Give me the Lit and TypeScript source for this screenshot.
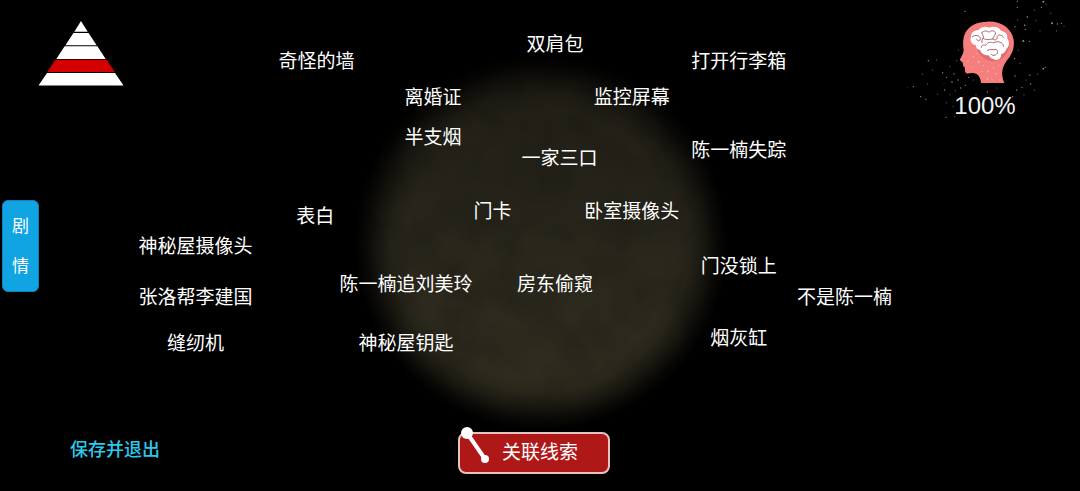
import { LitElement, html, css, svg } from 'lit';
import { customElement } from 'lit/decorators.js';

interface Clue { name: string; x: number; y: number; }

/* Centre of each clue, in percent of the board. */
const CLUES: Clue[] = [
  { name: '双肩包', x: 51.4, y: 8.7 },
  { name: '奇怪的墙', x: 29.3, y: 12.2 },
  { name: '打开行李箱', x: 68.4, y: 12.2 },
  { name: '离婚证', x: 40.1, y: 19.6 },
  { name: '监控屏幕', x: 58.5, y: 19.6 },
  { name: '半支烟', x: 40.1, y: 27.6 },
  { name: '陈一楠失踪', x: 68.4, y: 30.3 },
  { name: '一家三口', x: 51.8, y: 32 },
  { name: '门卡', x: 45.6, y: 42.7 },
  { name: '卧室摄像头', x: 58.5, y: 42.7 },
  { name: '表白', x: 29.2, y: 43.8 },
  { name: '神秘屋摄像头', x: 18.1, y: 49.9 },
  { name: '门没锁上', x: 68.4, y: 54 },
  { name: '陈一楠追刘美玲', x: 37.6, y: 57.6 },
  { name: '房东偷窥', x: 51.4, y: 57.6 },
  { name: '张洛帮李建国', x: 18.1, y: 60.3 },
  { name: '不是陈一楠', x: 78.2, y: 60.3 },
  { name: '烟灰缸', x: 68.4, y: 68.6 },
  { name: '缝纫机', x: 18.1, y: 69.6 },
  { name: '神秘屋钥匙', x: 37.6, y: 69.6 },
];

/* Sparks round the head: x, y, radius. */
const SPARKS: number[][] = [
  [352, 4, 2], [352, 22, 2], [195, 34, 2], [430, 5, 3], [424, 22, 2], [438, 12, 1.5], [404, 30, 1.5], [382, 51, 2.5],
  [374, 76, 2.5], [370, 123, 3], [388, 124, 2], [376, 88, 2], [345, 80, 2], [456, 70, 3], [472, 72, 2], [452, 40, 1.5],
  [470, 92, 1.5], [484, 70, 2], [492, 78, 1.5], [408, 62, 1.5], [420, 92, 1.5], [352, 60, 1.5], [430, 206, 2.5],
  [436, 202, 2], [412, 222, 1.5], [390, 225, 2], [392, 252, 2], [378, 240, 1.5], [366, 262, 2], [345, 228, 2],
  [350, 270, 2], [372, 284, 1.5], [404, 270, 1.5], [338, 290, 2], [360, 190, 1.5], [344, 176, 2], [355, 150, 1.5],
  [85, 182, 2], [110, 180, 1.5], [98, 210, 1.5], [68, 222, 1.5], [128, 218, 2], [140, 232, 2], [156, 246, 2.5],
  [162, 222, 2], [174, 240, 2], [40, 260, 2], [22, 262, 1.2], [82, 252, 1.5], [62, 290, 2], [78, 298, 2], [112, 282, 1.5],
  [134, 270, 2], [150, 284, 1.5], [166, 272, 1.5], [182, 264, 2], [196, 256, 2], [206, 232, 2], [220, 240, 1.5],
  [140, 308, 1.5], [160, 320, 1.5], [138, 352, 2], [164, 350, 1.5], [228, 284, 1.5], [262, 276, 2], [290, 264, 1.5],
  [150, 200, 1.5], [170, 182, 1.5], [176, 150, 1.5], [132, 250, 1.2],
];
const FACE_SPARKS: number[][] = [
  [204, 184, 2.5], [220, 170, 2], [236, 186, 3], [216, 202, 2], [250, 196, 2], [264, 214, 2.5], [280, 204, 2],
  [288, 222, 2.5], [262, 236, 2.5], [276, 240, 2], [296, 196, 2], [246, 214, 2], [230, 160, 2], [300, 240, 2],
];
const dots = (list: number[][], tone: string) =>
  list.map(([x, y, r]) => svg`<circle cx=${x} cy=${y} r=${r} fill=${tone}></circle>`);

@customElement('clue-board')
export class ClueBoard extends LitElement {
  static styles = css`
    :host { display: block; position: absolute; inset: 0; overflow: hidden; }
    .wall { position: absolute; inset: 0; width: 100%; height: 100%; }
    .clue {
      position: absolute; transform: translate(-50%, -50%);
      padding: 0; border: 0; background: none; color: #fff; white-space: nowrap; cursor: pointer;
      font: 400 19px/28px "Noto Sans CJK SC", sans-serif;
    }
  `;
  render() {
    return html`
      <svg class="wall" viewBox="0 0 1080 491" preserveAspectRatio="xMidYMid meet" aria-hidden="true">
        <defs>
          <linearGradient id="tone" x1="0" y1="0" x2="0" y2="1">
            <stop offset="0" stop-color="#1e1c14"></stop>
            <stop offset="0.5" stop-color="#29271c"></stop>
            <stop offset="1" stop-color="#322f20"></stop>
          </linearGradient>
          <radialGradient id="edge">
            <stop offset="0.72" stop-color="#fff"></stop>
            <stop offset="0.8" stop-color="#ddd"></stop>
            <stop offset="0.88" stop-color="#888"></stop>
            <stop offset="0.94" stop-color="#383838"></stop>
            <stop offset="1" stop-color="#000"></stop>
          </radialGradient>
          <mask id="beam"><circle cx="541" cy="243" r="187" fill="url(#edge)"></circle></mask>
          <filter id="grain" x="0" y="0" width="1" height="1">
            <feTurbulence type="fractalNoise" baseFrequency="0.025" numOctaves="4" seed="7"></feTurbulence>
            <feColorMatrix values="0 0 0 0 0  0 0 0 0 0  0 0 0 0 0  1.2 0 0 0 -0.45"></feColorMatrix>
          </filter>
        </defs>
        <g mask="url(#beam)">
          <rect x="349" y="50" width="384" height="384" fill="url(#tone)"></rect>
          <rect x="349" y="50" width="384" height="384" filter="url(#grain)" opacity="0.25"></rect>
        </g>
      </svg>
      ${CLUES.map((c) => html`<button class="clue" style="left:${c.x}%;top:${c.y}%">${c.name}</button>`)}
    `;
  }
}

@customElement('app-root')
export class AppRoot extends LitElement {
  static styles = css`
    :host { display: block; font-family: "Noto Sans CJK SC", sans-serif; color: #fff; background: #000; }
    .page {
      position: relative; box-sizing: border-box; min-height: 100vh;
      display: grid; grid-template-rows: 1fr auto 1fr;
    }
    .top { display: flex; justify-content: space-between; align-items: flex-start; padding: 0 10px 0 36px; }
    .top, .side, .bottom { position: relative; pointer-events: none; }
    button, a { pointer-events: auto; }
    .pyramid { width: 90px; height: 70px; margin-top: 18px; }
    .mind { display: flex; flex-direction: column; align-items: center; gap: 4px; }
    .head { width: 170px; height: 90px; overflow: visible; }
    .percent { position: relative; font: 24px/24px "Liberation Sans", sans-serif; color: #f4f4f4; }
    .side { display: flex; padding-left: 2px; }
    .story {
      display: flex; flex-direction: column; align-items: center; width: 37px; padding: 4px 0 6px;
      border: 1px solid #1583bb; border-radius: 6px; background: #10a4e2; color: #fff;
      font: 400 17px/40px "Noto Sans CJK SC", sans-serif; cursor: pointer;
    }
    .bottom {
      display: grid; grid-template-columns: 1fr auto 1fr; align-items: center; align-content: end;
      padding: 0 12px 17px 0;
    }
    .exit {
      justify-self: start; margin-left: 70px; padding-bottom: 10px; color: #2bc9ea; text-decoration: none;
      font: 500 18px/28px "Noto Sans CJK SC", sans-serif;
    }
    .link {
      position: relative; box-sizing: border-box; width: 152px; height: 42px; padding: 0 0 4px 12px;
      border: 2px solid #e8c4c0; border-radius: 8px; background: #ae1817; color: #fff;
      font: 400 19px/28px "Noto Sans CJK SC", sans-serif; cursor: pointer;
    }
    .pin { position: absolute; left: 0; top: -10px; width: 32px; height: 40px; }
  `;
  render() {
    return html`
      <main class="page">
        <clue-board></clue-board>
        <header class="top">
          <svg class="pyramid" viewBox="0 0 90 70" role="img" aria-label="层级">
            <path d="M45 3 51.7 13.8H38.3Z M37.4 15H52.6L60.6 27.2H29.4Z M28.6 28.3H61.4L69.7 40.9H20.3Z M11 55H79L87.5 67.5H2.5Z" fill="#fff"></path>
            <path d="M19.4 41.8H70.6L78.8 54H11.2Z" fill="#d40000"></path>
          </svg>
          <div class="mind">
            <svg class="head" viewBox="0 0 510 270" aria-hidden="true">
              ${dots(SPARKS, '#8d8d8d')}
              <path fill="#f57f7f" d="M262 65C302 63 334 84 341 119C344 142 337 160 324 177C308 198 300 218 313 249H243C242 230 232 218 216 219C206 220 199 223 196 216C193 211 196 205 194 202L189 198C191 194 188 190 187 186C183 184 179 182 180 178C184 169 191 160 191 149C188 132 188 114 196 98C208 76 232 65 262 65Z"></path>
              <path fill="#e06e70" d="M232 150C245 180 280 192 304 177C322 162 331 145 328 122L316 95Z"></path>
              <path fill="#fff" d="M235 91C244 79 260 79 268 83C282 77 298 83 303 92C317 94 324 105 322 115C330 127 328 140 319 147C316 157 309 161 303 163C305 177 291 184 281 178C273 176 269 171 266 166C252 166 242 159 240 149C232 150 227 143 229 136C215 134 208 121 213 110C213 98 223 90 235 91Z"></path>
              <g fill="none" stroke="#a8666c" stroke-width="3" stroke-linecap="round">
                <path d="M217 110C226 102 240 107 241 115C241 124 231 125 230 118M246 97C244 104 251 104 250 112C246 117 245 122 246 128M246 97C253 91 262 92 267 97C273 91 282 91 286 97C287 106 281 109 278 116M278 116C284 124 293 119 291 110C296 102 307 105 311 112"></path>
                <path d="M250 115C259 122 269 118 278 117M244 142C244 134 251 134 257 136C262 126 274 125 280 129C293 121 309 126 311 139M262 151C272 145 281 152 288 148C295 151 294 161 286 165C280 168 275 165 273 162"></path>
              </g>
              ${dots(FACE_SPARKS, '#ffb4ac')}
            </svg>
            <div class="percent">100%</div>
          </div>
        </header>
        <nav class="side"><button class="story"><span>剧</span><span>情</span></button></nav>
        <footer class="bottom">
          <a class="exit" href="#exit">保存并退出</a>
          <button class="link">
            <svg class="pin" viewBox="0 0 32 40" aria-hidden="true">
              <path d="M7 9 25 35" stroke="#fff" stroke-width="4"></path>
              <circle cx="7" cy="9" r="6" fill="#fff"></circle><circle cx="25" cy="35" r="4" fill="#fff"></circle>
            </svg>
            关联线索
          </button>
        </footer>
      </main>
    `;
  }
}
